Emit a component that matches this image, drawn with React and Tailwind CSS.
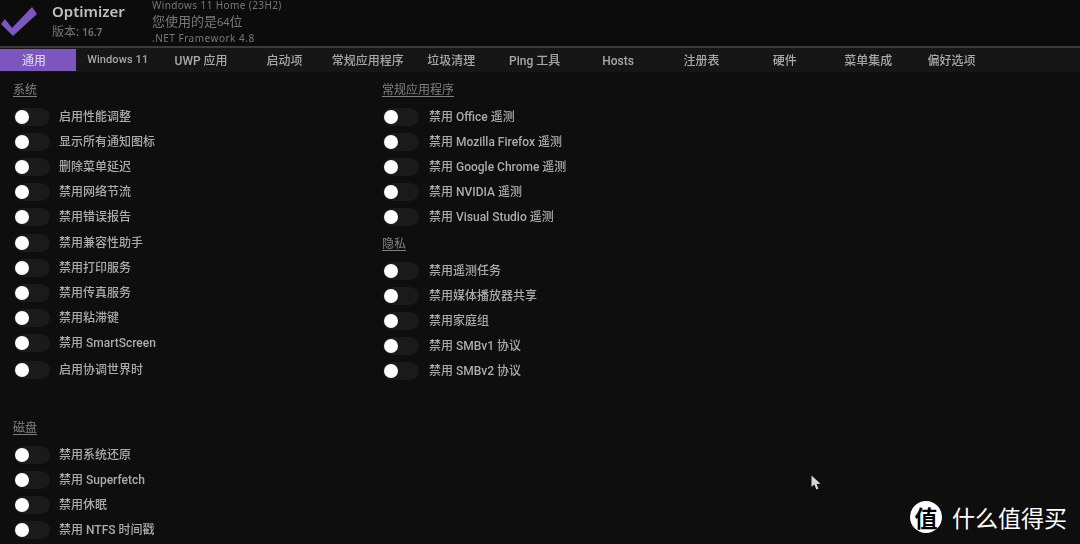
const font = { fontFamily: '"Noto Sans","Noto Sans CJK SC",sans-serif' };
const rowFont = { fontFamily: 'Roboto,"Noto Sans CJK SC",sans-serif' };
const tabs = ["Windows 11", "UWP 应用", "启动项", "常规应用程序", "垃圾清理", "Ping 工具", "Hosts", "注册表", "硬件", "菜单集成", "偏好选项"];
const sys = ["启用性能调整", "显示所有通知图标", "删除菜单延迟", "禁用网络节流", "禁用错误报告", "禁用兼容性助手", "禁用打印服务", "禁用传真服务", "禁用粘滞键", "禁用 SmartScreen"];
const disk = ["禁用系统还原", "禁用 Superfetch", "禁用休眠", "禁用 NTFS 时间戳"];
const apps = ["禁用 Office 遥测", "禁用 Mozilla Firefox 遥测", "禁用 Google Chrome 遥测", "禁用 NVIDIA 遥测", "禁用 Visual Studio 遥测"];
const priv = ["禁用遥测任务", "禁用媒体播放器共享", "禁用家庭组", "禁用 SMBv1 协议", "禁用 SMBv2 协议"];

function Row({ label, className = "", textClass = "ml-[9px]" }) {
  return (
    <div className={`flex h-[25.2px] items-center ${className}`}>
      <div className="ml-[1px] flex h-[18px] w-[36px] items-center rounded-full bg-[#1a1a1a]">
        <div className="ml-[1px] h-[14px] w-[14px] rounded-full bg-white" />
      </div>
      <span style={rowFont} className={`${textClass} whitespace-nowrap text-[12px] font-medium text-[#ababab]`}>{label}</span>
    </div>
  );
}

function Section({ title, items, className = "", textClass, children }) {
  return (
    <section className={className}>
      <h2 className="mb-[6px] h-[16px] text-[12px] leading-[16px] text-[#808080] underline underline-offset-2">{title}</h2>
      {items.map((t) => <Row key={t} label={t} textClass={textClass} />)}
      {children}
    </section>
  );
}

export default function App() {
  return (
    <div style={font} className="relative h-[544px] w-[1080px] overflow-hidden bg-[#0e0e0f]">
      <div className="blur-[0.6px]">
        <header className="flex h-[46px] bg-[#0c0c0d]">
          <svg width="38" height="30" viewBox="0 0 38 30" className="mt-[7px] shrink-0">
            <path d="M1 17 L5 12 L12 21 L32 0 L37 7 L13 29 Z" fill="#7d57c1" />
          </svg>
          <div className="ml-[14px] w-[100px]">
            <div className="mt-[1px] text-[15px] font-semibold leading-[20px] text-[#c0c0c0]">Optimizer</div>
            <div className="mt-[2px] text-[12px] leading-[18px] text-[#757575]">版本: <span className="text-[10px] font-semibold">16.7</span></div>
          </div>
          <div className="text-[#787878]">
            <div className="text-[10px] leading-[11px] tracking-[0.4px]">Windows 11 Home (23H2)</div>
            <div className="mt-[2px] text-[13px] leading-[17px]">您使用的是<span className="text-[11px]">64</span>位</div>
            <div className="mt-[1px] text-[10px] leading-[15px] tracking-[0.5px]">.NET Framework 4.8</div>
          </div>
        </header>
        <div className="h-[2px] bg-[#3c3c3c]" />
        <nav style={rowFont} className="flex h-[24px] items-center bg-[#161616] text-[12px] font-medium text-[#a8a8a8]">
          <div className="flex h-[22px] w-[76px] items-center justify-center bg-[#7c56bd] pr-2 pt-[1px] text-[#d8cfe8]">通用</div>
          {tabs.map((t) => (
            <div key={t} className={`w-[83.4px] whitespace-nowrap pt-[1px] text-center ${t === "Windows 11" ? "text-[11px] tracking-[0.1px]" : ""}`}>{t}</div>
          ))}
        </nav>
        <main className="flex pt-[10px]">
          <div className="ml-[13px] w-[369px]">
            <Section title="系统" items={sys}>
              <Row label="启用协调世界时" className="mt-[2px]" />
            </Section>
            <Section title="磁盘" items={disk} className="mt-[37px]" />
          </div>
          <div>
            <Section title="常规应用程序" items={apps} textClass="ml-[10px]" />
            <Section title="隐私" items={priv} textClass="ml-[10px]" className="mt-[6px]" />
          </div>
        </main>
      </div>
      <svg width="12" height="16" viewBox="0 0 12 16" className="absolute left-[811px] top-[475px]">
        <path d="M0.5 0.5 L0.5 12 L3.3 9.6 L5.4 14.4 L7.5 13.5 L5.5 9 L9.5 8.8 Z" fill="#d6d6d6" />
      </svg>
      <div className="absolute left-[910px] top-[501px] flex items-center">
        <div className="flex h-[32px] w-[32px] items-center justify-center rounded-full bg-white text-[23px] font-bold text-black" style={{ fontFamily: '"Noto Sans CJK SC",sans-serif' }}>值</div>
        <span className="ml-[10px] text-[23px] leading-[32px] text-white" style={{ fontFamily: '"Noto Sans CJK SC",sans-serif' }}>什么值得买</span>
      </div>
    </div>
  );
}
